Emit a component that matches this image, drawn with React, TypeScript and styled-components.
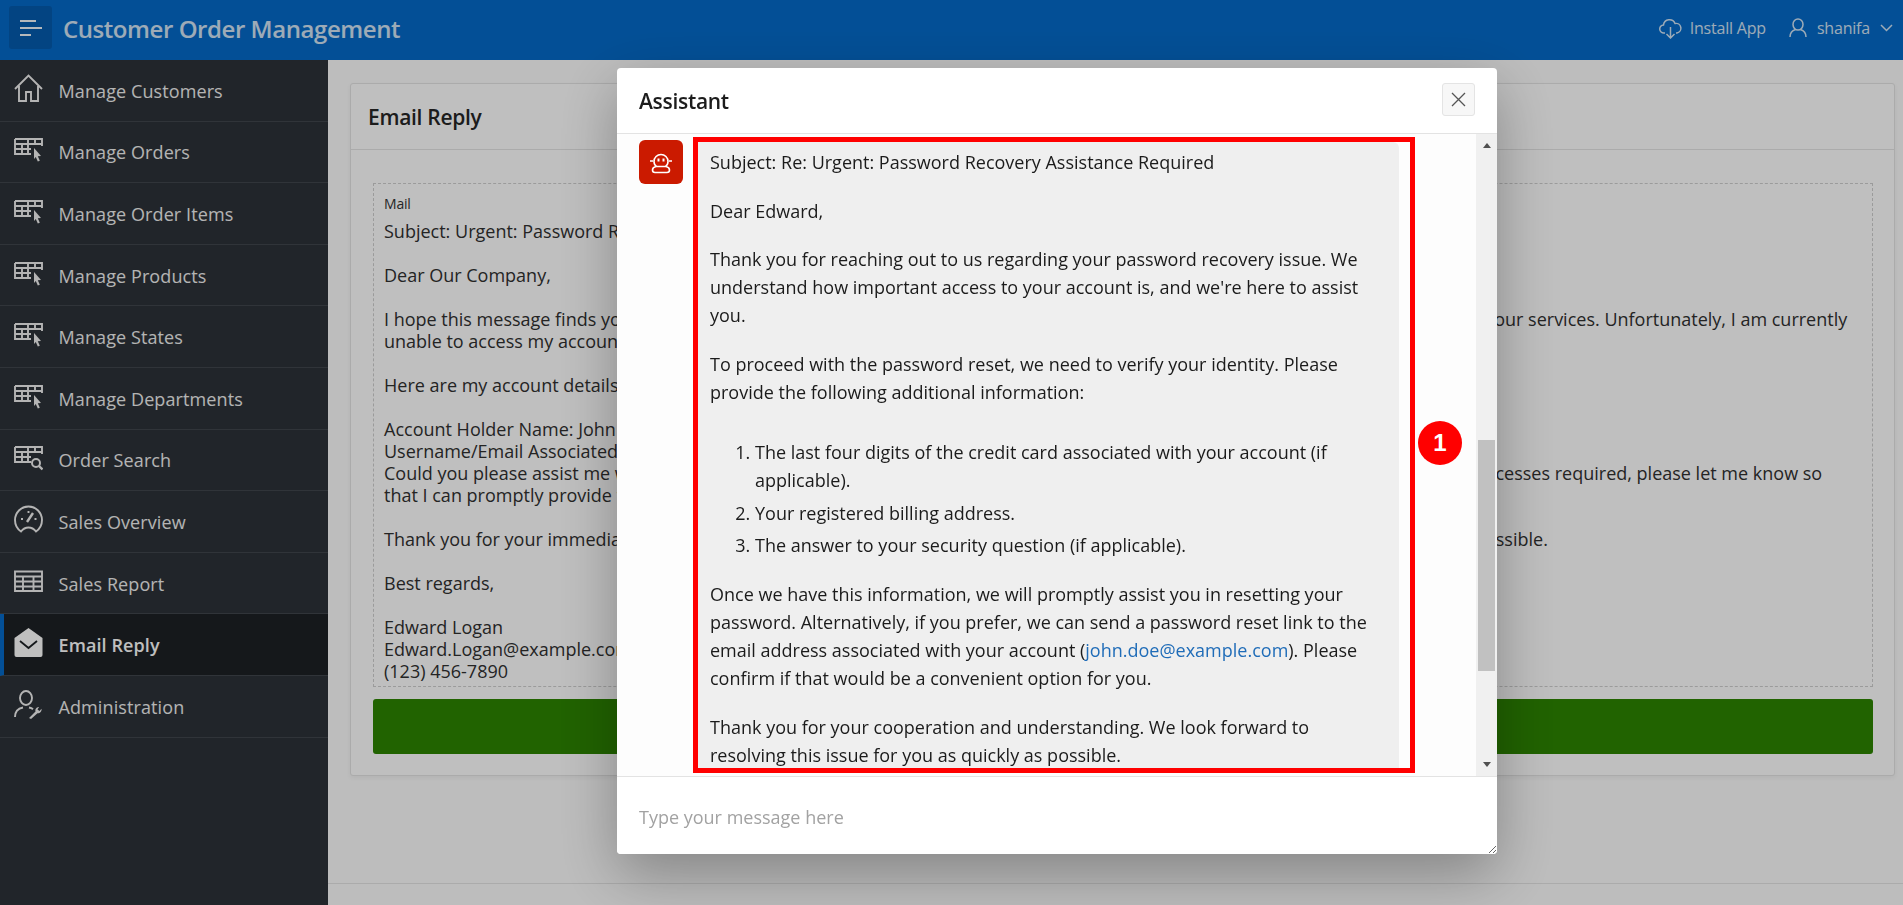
import { FC, ReactNode } from "react";
import styled, { createGlobalStyle } from "styled-components";

const FONT = `"Open Sans", "Noto Sans", "Liberation Sans", sans-serif`;

const GlobalStyle = createGlobalStyle`
  html, body {
    margin: 0;
    height: 100%;
    overflow: hidden;
  }
  body {
    font-family: ${FONT};
    background: #fcfcfc;
  }
`;

const Shell = styled.div`
  height: 905px;
  display: grid;
  grid-template-rows: 60px 1fr;
  grid-template-columns: 328px 1fr;
`;

const Header = styled.header`
  grid-column: 1 / 3;
  background: #056ac8;
  display: flex;
  align-items: flex-start;
  padding-left: 9px;
  color: #fff;
`;
const MenuButton = styled.div`
  width: 43px;
  height: 43px;
  margin-top: 6px;
  border-radius: 3px;
  background: #055bae;
  display: flex;
  align-items: center;
  justify-content: center;
  flex-shrink: 0;
`;
const AppTitle = styled.div`
  margin: 10px 0 0 11px;
  font-size: 24px;
  line-height: 38px;
  font-weight: 600;
  letter-spacing: -0.44px;
  opacity: 0.82;
`;
const HeaderActions = styled.div`
  margin-left: auto;
  height: 56px;
  display: flex;
  align-items: center;
  padding-right: 10px;
  font-size: 16px;
  letter-spacing: -0.2px;
  opacity: 0.82;
`;
const HeaderAction = styled.div<{ $gap: number }>`
  display: flex;
  align-items: center;
  gap: ${(p) => p.$gap}px;
  margin-left: 23px;
`;

const Sidebar = styled.nav`
  background: #2d3238;
`;
const NavRow = styled.div<{ $active?: boolean }>`
  height: 61.6px;
  box-sizing: border-box;
  display: flex;
  align-items: center;
  gap: 15.5px;
  padding-top: 1px;
  padding-left: ${(p) => (p.$active ? "10px" : "14px")};
  border-bottom: 1px solid #41464c;
  border-left: ${(p) => (p.$active ? "4px solid #056ac8" : "none")};
  background: ${(p) => (p.$active ? "#1d2125" : "transparent")};
  color: ${(p) => (p.$active ? "#fff" : "#f0f0f0")};
  font-size: 18px;
  font-weight: ${(p) => (p.$active ? 600 : 400)};
  letter-spacing: 0.1px;
`;
const NavIcon = styled.span`
  width: 29px;
  height: 29px;
  flex-shrink: 0;
  display: flex;
  margin-top: -5px;
`;

const Main = styled.main`
  display: flex;
  flex-direction: column;
  padding: 23px 8px 0 22px;
  min-width: 0;
`;
const Card = styled.section`
  background: #fff;
  border: 1px solid #e4e4e4;
  border-radius: 3px;
  box-shadow: 0 2px 4px rgba(0, 0, 0, 0.05);
  display: flex;
  flex-direction: column;
`;
const CardTitle = styled.h2`
  margin: 0;
  height: 65px;
  border-bottom: 1px solid #e4e4e4;
  padding-left: 17px;
  display: flex;
  align-items: center;
  font-size: 21px;
  font-weight: 600;
  letter-spacing: -0.3px;
  color: #262626;
`;
const CardBody = styled.div`
  padding: 33px 21px 21px 22px;
  display: flex;
  flex-direction: column;
  gap: 12px;
`;
const MailBox = styled.div`
  box-sizing: border-box;
  border: 1px dashed #cfcfcf;
  height: 504px;
  padding: 11px 0 0 10px;
  overflow: hidden;
`;
const MailLabel = styled.div`
  font-size: 14px;
  line-height: 18px;
  letter-spacing: -0.2px;
  color: #333;
`;
const MailText = styled.div`
  margin-top: 7px;
  font-size: 18px;
  line-height: 22px;
  color: #303030;
  white-space: pre;
`;
const GreenButton = styled.div`
  height: 55px;
  border-radius: 3px;
  background: #2c8400;
`;
const PageFooter = styled.footer`
  margin-top: auto;
  height: 21px;
  margin-left: -22px;
  margin-right: -8px;
  border-top: 1px solid #e4e4e4;
`;

const Overlay = styled.div`
  position: fixed;
  inset: 0;
  background: rgba(0, 0, 0, 0.25);
`;
const Modal = styled.div`
  position: absolute;
  left: 617px;
  top: 68px;
  width: 880px;
  height: 786px;
  background: #fff;
  border-radius: 4px;
  box-shadow: 0 20px 60px rgba(0, 0, 0, 0.3);
  display: flex;
  flex-direction: column;
  overflow: hidden;
`;
const ModalHeader = styled.div`
  height: 65px;
  flex-shrink: 0;
  border-bottom: 1px solid #e3e3e3;
  display: flex;
  align-items: center;
  justify-content: space-between;
  padding: 0 22px;
`;
const ModalTitle = styled.h3`
  margin: 0;
  font-size: 21px;
  font-weight: 600;
  letter-spacing: -0.3px;
  color: #1c1c1c;
`;
const CloseButton = styled.div`
  width: 31px;
  height: 31px;
  margin-top: -2px;
  background: #f7f7f7;
  border: 1px solid #e4e4e4;
  border-radius: 3px;
  display: flex;
  align-items: center;
  justify-content: center;
`;
const ModalBody = styled.div`
  flex: 1;
  min-height: 0;
  background: #fdfdfd;
  display: flex;
`;
const ChatArea = styled.div`
  flex: 1;
  position: relative;
  display: flex;
  align-items: flex-start;
  padding: 3px 0 3px 22px;
  gap: 10px;
  box-sizing: border-box;
`;
const Avatar = styled.div`
  width: 44px;
  height: 44px;
  margin-top: 3px;
  border-radius: 6px;
  background: #cb1a00;
  display: flex;
  align-items: center;
  justify-content: center;
  flex-shrink: 0;
`;
const Highlight = styled.div`
  width: 722px;
  height: 100%;
  box-sizing: border-box;
  border: 5px solid #ff0000;
  padding-right: 11px;
  overflow: hidden;
`;
const Bubble = styled.div`
  height: 100%;
  box-sizing: border-box;
  background: #efefef;
  border-radius: 0 6px 0 0;
  padding: 6px 12px 0;
  font-size: 18px;
  line-height: 28px;
  color: #1b1b1b;
  overflow: hidden;
  & > p {
    margin: 0 0 20.6px;
  }
`;
const Steps = styled.ol`
  margin: 0 0 21px;
  padding: 12px 0 0 45px;
  & > li {
    margin-bottom: 4.5px;
  }
`;
const MailLink = styled.span`
  color: #1f6cb8;
`;
const Marker = styled.div`
  position: absolute;
  left: 801px;
  top: 287px;
  width: 44px;
  height: 44px;
  border-radius: 50%;
  background: #ff0000;
  color: #fff;
  font-family: "Liberation Sans", sans-serif;
  font-size: 24px;
  font-weight: 700;
  display: flex;
  align-items: center;
  justify-content: center;
`;
const Scrollbar = styled.div`
  width: 21px;
  flex-shrink: 0;
  background: #f0f0f0;
  display: flex;
  flex-direction: column;
  align-items: center;
`;
const ScrollArrow = styled.div<{ $down?: boolean }>`
  width: 0;
  height: 0;
  margin: ${(p) => (p.$down ? "8px 0 9px" : "9px 0 0")};
  border-left: 4.5px solid transparent;
  border-right: 4.5px solid transparent;
  border-bottom: ${(p) => (p.$down ? "none" : "5px solid #505050")};
  border-top: ${(p) => (p.$down ? "5px solid #505050" : "none")};
`;
const ScrollThumb = styled.div`
  width: 17px;
  height: 231px;
  margin-top: 292px;
  background: #c1c1c1;
`;
const Spacer = styled.div`
  flex: 1;
`;
const ModalFooter = styled.div`
  height: 77px;
  flex-shrink: 0;
  border-top: 1px solid #e3e3e3;
  display: flex;
`;
const MessageInput = styled.textarea`
  flex: 1;
  border: 0;
  outline: 0;
  resize: both;
  padding: 28px 22px 0;
  font-family: ${FONT};
  font-size: 18px;
  line-height: 24px;
  &::placeholder {
    color: #a2a2a2;
  }
`;

const Stroke: FC<{ children: ReactNode; color?: string; box?: string }> = ({
  children,
  color = "#f0f0f0",
  box = "0 0 29 29",
}) => (
  <svg viewBox={box} width="100%" height="100%" fill="none" stroke={color} strokeWidth="1.9">
    {children}
  </svg>
);

const TableGrid = () => (
  <path d="M1 4h27v7M1 4v15h16M1 9h27M1 14h16M8 9v10M14 4v15M21 4v5" />
);
const PointerIcon = () => (
  <Stroke>
    <TableGrid />
    <path d="M20 13l7 8-3.2.2 2 4.600-2 .8-2-4.600-1.800 2z" fill="#f0f0f0" stroke="none" />
  </Stroke>
);
const SearchIcon = () => (
  <Stroke>
    <TableGrid />
    <circle cx="22" cy="20" r="4" strokeWidth="2" />
    <path d="M25 23l3.500 3.500" strokeWidth="2.400" />
  </Stroke>
);
const HomeIcon = () => (
  <Stroke>
    <path d="M1 15L14.500 1.500 28 15M5 12v15h7v-9h5v9h7V12" />
  </Stroke>
);
const GaugeIcon = () => (
  <Stroke>
    <path d="M7 26.500C3.400 24 1 19.600 1 15a13.500 13.500 0 0 1 27 0c0 4.600-2.400 9-6 11.500-2-2.600-4.600-4-7.500-4S9 23.900 7 26.500z" />
    <path d="M13 17l6-9" strokeWidth="2.400" />
    <path d="M7 14h2M20.500 14h2M14.500 6v2" />
  </Stroke>
);
const TableIcon = () => (
  <Stroke>
    <path d="M1 4.500h27v19.500H1zM1 9.500h27M1 14.500h27M1 19.500h27M9 9.500v14.500M19.500 9.500v14.500" />
  </Stroke>
);
const EnvelopeIcon = () => (
  <svg viewBox="0 0 29 29" width="100%" height="100%">
    <path d="M14.500 0L28.500 10v17a2 2 0 0 1-2 2h-24a2 2 0 0 1-2-2V10z" fill="#fff" />
    <path d="M6 13l8.500 7 8.500-7" fill="none" stroke="#1d2125" strokeWidth="1.800" />
  </svg>
);
const AdminIcon = () => (
  <Stroke>
    <ellipse cx="12" cy="8" rx="6" ry="7" />
    <path d="M1 27c0-5 3-8.500 8-9.500M15 17.500c1.500.3 3 .8 4 1.700" />
    <path
      d="M15 28l6.500-6.500c-.6-2.300 1-4.500 3.500-4.500l-1.500 2.500 2 1.500 2-2.200c.5 2.700-1.700 4.800-4 4.500L17 29z"
      fill="#f0f0f0"
      stroke="none"
    />
  </Stroke>
);

const NAV_ITEMS: { label: string; icon: ReactNode; active?: boolean }[] = [
  { label: "Manage Customers", icon: <HomeIcon /> },
  { label: "Manage Orders", icon: <PointerIcon /> },
  { label: "Manage Order Items", icon: <PointerIcon /> },
  { label: "Manage Products", icon: <PointerIcon /> },
  { label: "Manage States", icon: <PointerIcon /> },
  { label: "Manage Departments", icon: <PointerIcon /> },
  { label: "Order Search", icon: <SearchIcon /> },
  { label: "Sales Overview", icon: <GaugeIcon /> },
  { label: "Sales Report", icon: <TableIcon /> },
  { label: "Email Reply", icon: <EnvelopeIcon />, active: true },
  { label: "Administration", icon: <AdminIcon /> },
];

const MAIL = `Subject: Urgent: Password Recovery Assistance Required

Dear Our Company,

I hope this message finds you well. I am writing to request urgent support with recovering the password for my online account with your services. Unfortunately, I am currently
unable to access my account because I have forgotten my password.

Here are my account details:

Account Holder Name: John Doe
Username/Email Associated with Account: john.doe@example.com
Could you please assist me with resetting my password as soon as possible? If there are any additional verification steps or other processes required, please let me know so
that I can promptly provide the necessary information.

Thank you for your immediate attention to this matter. I really do look forward to resolving this issue with your IT team as soon as possible.

Best regards,

Edward Logan
Edward.Logan@example.com
(123) 456-7890`;

export default function App() {
  return (
    <>
      <GlobalStyle />
      <Shell>
        <Header>
          <MenuButton>
            <svg width="22" height="18" viewBox="0 0 22 18" stroke="#fff" strokeWidth="2" opacity="0.95">
              <path d="M0 2h16M0 9h22M0 16h11" />
            </svg>
          </MenuButton>
          <AppTitle>Customer Order Management</AppTitle>
          <HeaderActions>
            <HeaderAction $gap={8}>
              <svg width="23" height="21" viewBox="0 0 23 21" fill="none" stroke="#fff" strokeWidth="1.500">
                <path d="M6 15H5a4 4 0 0 1-.5-8A6 6 0 0 1 16 5.500a4.800 4.800 0 0 1 2 9.500h-1" />
                <path d="M11.500 9v11M7.500 16l4 4 4-4" />
              </svg>
              Install App
            </HeaderAction>
            <HeaderAction $gap={10}>
              <svg width="18" height="20" viewBox="0 0 18 20" fill="none" stroke="#fff" strokeWidth="1.500">
                <ellipse cx="9" cy="6.500" rx="5" ry="5.500" />
                <path d="M1 19c0-4 2.500-6.500 5.500-7.500M17 19c0-4-2.500-6.500-5.500-7.500" />
              </svg>
              shanifa
              <svg width="13" height="8" viewBox="0 0 13 8" fill="none" stroke="#fff" strokeWidth="1.500">
                <path d="M1 1l5.500 5.500L12 1" />
              </svg>
            </HeaderAction>
          </HeaderActions>
        </Header>
        <Sidebar>
          {NAV_ITEMS.map((item) => (
            <NavRow key={item.label} $active={item.active}>
              <NavIcon>{item.icon}</NavIcon>
              {item.label}
            </NavRow>
          ))}
        </Sidebar>
        <Main>
          <Card>
            <CardTitle>Email Reply</CardTitle>
            <CardBody>
              <MailBox>
                <MailLabel>Mail</MailLabel>
                <MailText>{MAIL}</MailText>
              </MailBox>
              <GreenButton />
            </CardBody>
          </Card>
          <PageFooter />
        </Main>
      </Shell>
      <Overlay>
        <Modal>
          <ModalHeader>
            <ModalTitle>Assistant</ModalTitle>
            <CloseButton>
              <svg width="15" height="15" viewBox="0 0 15 15" stroke="#555" strokeWidth="1.300">
                <path d="M1 1l13 13M14 1L1 14" />
              </svg>
            </CloseButton>
          </ModalHeader>
          <ModalBody>
            <ChatArea>
              <Avatar>
                <svg width="24" height="23" viewBox="0 0 24 23" fill="none" stroke="#fff" strokeWidth="1.600">
                  <path d="M5 10.500a7 7 0 0 1 14 0c0 2.500-1 4-2.500 5h-9C6 14.500 5 13 5 10.500z" />
                  <path d="M1 10h3M20 10h3" />
                  <path d="M9.500 7.500v3M14.500 7.500v3" strokeWidth="2" />
                  <path d="M7 15.500c-2.500.6-3.500 2-3.500 3.500 0 1.500 1 2.500 2.500 2.500h12c1.500 0 2.500-1 2.500-2.500s-1-2.900-3.500-3.500" />
                </svg>
              </Avatar>
              <Highlight>
                <Bubble>
                  <p>Subject: Re: Urgent: Password Recovery Assistance Required</p>
                  <p>Dear Edward,</p>
                  <p>
                    Thank you for reaching out to us regarding your password recovery issue. We understand
                    how important access to your account is, and we're here to assist you.
                  </p>
                  <p>
                    To proceed with the password reset, we need to verify your identity. Please provide the
                    following additional information:
                  </p>
                  <Steps>
                    <li>The last four digits of the credit card associated with your account (if applicable).</li>
                    <li>Your registered billing address.</li>
                    <li>The answer to your security question (if applicable).</li>
                  </Steps>
                  <p>
                    Once we have this information, we will promptly assist you in resetting your password.
                    Alternatively, if you prefer, we can send a password reset link to the email address
                    associated with your account (<MailLink>john.doe@example.com</MailLink>). Please confirm if
                    that would be a convenient option for you.
                  </p>
                  <p>
                    Thank you for your cooperation and understanding. We look forward to resolving this issue
                    for you as quickly as possible.
                  </p>
                </Bubble>
              </Highlight>
              <Marker>1</Marker>
            </ChatArea>
            <Scrollbar>
              <ScrollArrow />
              <ScrollThumb />
              <Spacer />
              <ScrollArrow $down />
            </Scrollbar>
          </ModalBody>
          <ModalFooter>
            <MessageInput placeholder="Type your message here" />
          </ModalFooter>
        </Modal>
      </Overlay>
    </>
  );
}
